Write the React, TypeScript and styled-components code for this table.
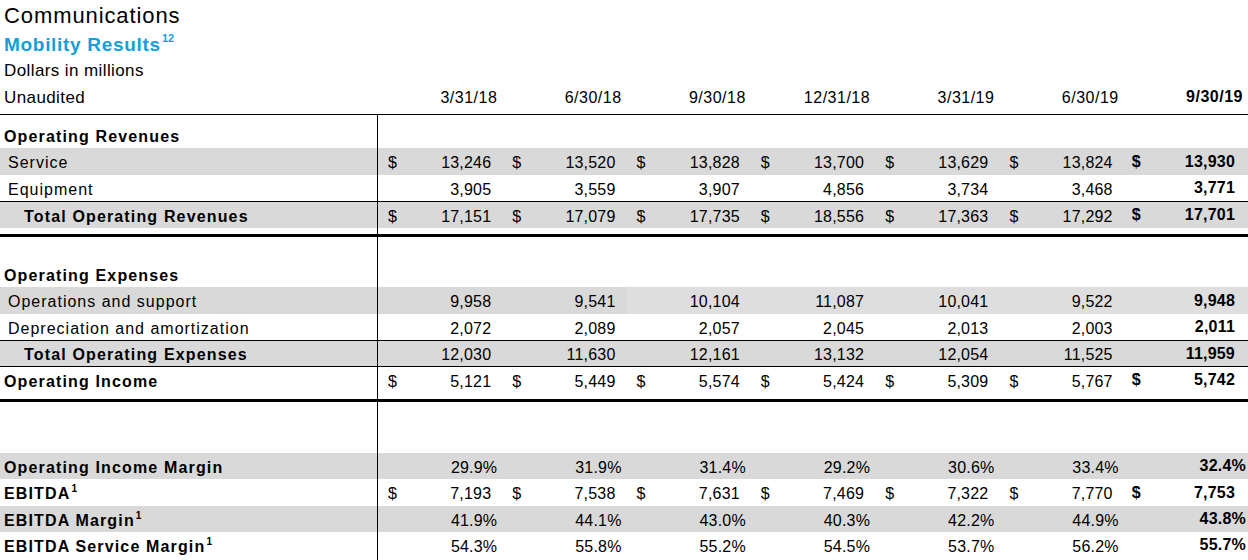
import React from "react";
import styled, { createGlobalStyle } from "styled-components";

const GlobalStyle = createGlobalStyle`
  html, body { margin: 0; padding: 0; background: #ffffff; }
  body {
    font-family: "Liberation Sans", Arial, Helvetica, sans-serif;
    color: #000000;
  }
`;

const COLS = "378px repeat(7, 1fr)";
const SHADE = "#d9d9d9";
const SHADE_LIGHT = "#dedede";

const Page = styled.div`
  width: 1248px;
  height: 560px;
  overflow: hidden;
  background: #ffffff;
`;

const Header = styled.header`
  display: flex;
  flex-direction: column;
  height: 114px;
  padding-top: 3px;
  box-sizing: border-box;
`;

const Title = styled.h1`
  margin: 0;
  padding-left: 4px;
  font-size: 22px;
  font-weight: 400;
  line-height: 26px;
  letter-spacing: 0.9px;
`;

const Subtitle = styled.h2`
  margin: 0;
  padding-left: 4px;
  padding-top: 2px;
  font-size: 19px;
  font-weight: 700;
  line-height: 27px;
  letter-spacing: 0.7px;
  color: #139fda;
`;

const Sup = styled.sup<{ $size: number; $lift: number }>`
  font-size: ${(p) => p.$size}px;
  line-height: 0;
  vertical-align: ${(p) => p.$lift}px;
  letter-spacing: 0;
  margin-left: 1px;
`;

const Note = styled.div`
  padding-left: 4px;
  font-size: 17px;
  line-height: 26px;
  letter-spacing: 0.4px;
`;

const HeadRow = styled.div`
  display: grid;
  grid-template-columns: ${COLS};
  height: 26px;
  padding-top: 1px;
  align-items: center;
`;

const HeadLabel = styled.div`
  padding-left: 4px;
  font-size: 17px;
  letter-spacing: 0.4px;
`;

const DateCell = styled.div<{ $bold?: boolean }>`
  text-align: right;
  padding-right: 5px;
  font-size: 16px;
  letter-spacing: 0.5px;
  font-weight: ${(p) => (p.$bold ? 700 : 400)};
  padding-bottom: ${(p) => (p.$bold ? 3 : 0)}px;
`;

const Table = styled.section`
  border-top: 1px solid #000000;
  display: flex;
  flex-direction: column;
`;

const Row = styled.div<{ $h: number; $shade?: boolean; $rule?: number }>`
  display: grid;
  grid-template-columns: ${COLS};
  height: ${(p) => p.$h}px;
  background: ${(p) => (p.$shade ? SHADE : "transparent")};
  border-top: ${(p) => (p.$rule ? `${p.$rule}px solid #000000` : "none")};
`;

const Label = styled.div<{ $indent: number; $bold?: boolean }>`
  box-sizing: border-box;
  border-right: 1px solid #000000;
  padding-left: ${(p) => p.$indent}px;
  padding-top: 3px;
  display: flex;
  align-items: center;
  white-space: nowrap;
  font-size: 16px;
  font-weight: ${(p) => (p.$bold ? 700 : 400)};
  letter-spacing: ${(p) => (p.$bold ? 1.15 : 1.0)}px;
`;

const LabelText = styled.span`
  display: inline-block;
`;

const Value = styled.div<{ $last?: boolean; $pct?: boolean; $tone?: boolean }>`
  display: flex;
  align-items: center;
  justify-content: space-between;
  padding-left: ${(p) => (p.$last ? 8 : 10)}px;
  padding-right: ${(p) =>
    p.$pct ? (p.$last ? 2 : 5) : p.$last ? 13 : 11}px;
  padding-top: ${(p) => (p.$last ? 0 : 3)}px;
  background: ${(p) => (p.$tone ? SHADE_LIGHT : "transparent")};
  font-size: 16px;
  letter-spacing: 0.2px;
  font-weight: ${(p) => (p.$last ? 700 : 400)};
  white-space: nowrap;
`;

const dates = ["3/31/18", "6/30/18", "9/30/18", "12/31/18", "3/31/19", "6/30/19", "9/30/19"];

type LineProps = {
  label?: React.ReactNode;
  indent?: number;
  bold?: boolean;
  values?: string[];
  dollar?: boolean;
  pct?: boolean;
  shade?: boolean;
  rule?: number;
  h: number;
  toneFrom?: number;
};

const Line: React.FC<LineProps> = ({
  label,
  indent = 4,
  bold,
  values,
  dollar,
  pct,
  shade,
  rule,
  h,
  toneFrom,
}) => (
  <Row $h={h} $shade={shade} $rule={rule}>
    <Label $indent={indent} $bold={bold}>
      {label ? <LabelText>{label}</LabelText> : null}
    </Label>
    {values?.map((v, i) => (
      <Value
        key={i}
        $last={i === values.length - 1}
        $pct={pct}
        $tone={toneFrom !== undefined && i >= toneFrom}
      >
        <span>{dollar ? "$" : ""}</span>
        <span>{v}</span>
      </Value>
    ))}
  </Row>
);

const Gap: React.FC<{ h: number; rule?: number }> = ({ h, rule }) => (
  <Row $h={h} $rule={rule}>
    <Label $indent={0} />
  </Row>
);

export default function App() {
  return (
    <Page>
      <GlobalStyle />
      <Header>
        <Title>Communications</Title>
        <Subtitle>
          Mobility Results
          <Sup $size={11} $lift={9}>12</Sup>
        </Subtitle>
        <Note>Dollars in millions</Note>
        <HeadRow>
          <HeadLabel>Unaudited</HeadLabel>
          {dates.map((d, i) => (
            <DateCell key={d} $bold={i === dates.length - 1}>
              {d}
            </DateCell>
          ))}
        </HeadRow>
      </Header>

      <Table>
        <Gap h={7} />
        <Line h={26} bold label="Operating Revenues" />
        <Line
          h={27}
          shade
          indent={8}
          label="Service"
          dollar
          values={["13,246", "13,520", "13,828", "13,700", "13,629", "13,824", "13,930"]}
        />
        <Line
          h={26}
          indent={8}
          label="Equipment"
          values={["3,905", "3,559", "3,907", "4,856", "3,734", "3,468", "3,771"]}
        />
        <Line
          h={26}
          rule={1}
          shade
          bold
          indent={24}
          label="Total Operating Revenues"
          dollar
          values={["17,151", "17,079", "17,735", "18,556", "17,363", "17,292", "17,701"]}
        />
        <Gap h={6} />
        <Gap h={24} rule={3} />
        <Line h={26} bold label="Operating Expenses" />
        <Line
          h={27}
          shade
          indent={8}
          label="Operations and support"
          toneFrom={2}
          values={["9,958", "9,541", "10,104", "11,087", "10,041", "9,522", "9,948"]}
        />
        <Line
          h={26}
          indent={8}
          label="Depreciation and amortization"
          values={["2,072", "2,089", "2,057", "2,045", "2,013", "2,003", "2,011"]}
        />
        <Line
          h={25}
          rule={1}
          shade
          bold
          indent={24}
          label="Total Operating Expenses"
          values={["12,030", "11,630", "12,161", "13,132", "12,054", "11,525", "11,959"]}
        />
        <Line
          h={26}
          rule={1}
          bold
          label="Operating Income"
          dollar
          values={["5,121", "5,449", "5,574", "5,424", "5,309", "5,767", "5,742"]}
        />
        <Gap h={6} />
        <Gap h={51} rule={3} />
        <Line
          h={26}
          shade
          bold
          label="Operating Income Margin"
          pct
          values={["29.9%", "31.9%", "31.4%", "29.2%", "30.6%", "33.4%", "32.4%"]}
        />
        <Line
          h={27}
          bold
          label={
            <>
              EBITDA
              <Sup $size={10} $lift={7}>1</Sup>
            </>
          }
          dollar
          values={["7,193", "7,538", "7,631", "7,469", "7,322", "7,770", "7,753"]}
        />
        <Line
          h={26}
          shade
          bold
          label={
            <>
              EBITDA Margin
              <Sup $size={10} $lift={7}>1</Sup>
            </>
          }
          pct
          values={["41.9%", "44.1%", "43.0%", "40.3%", "42.2%", "44.9%", "43.8%"]}
        />
        <Line
          h={26}
          bold
          label={
            <>
              EBITDA Service Margin
              <Sup $size={10} $lift={7}>1</Sup>
            </>
          }
          pct
          values={["54.3%", "55.8%", "55.2%", "54.5%", "53.7%", "56.2%", "55.7%"]}
        />
        <Gap h={10} />
      </Table>
    </Page>
  );
}
